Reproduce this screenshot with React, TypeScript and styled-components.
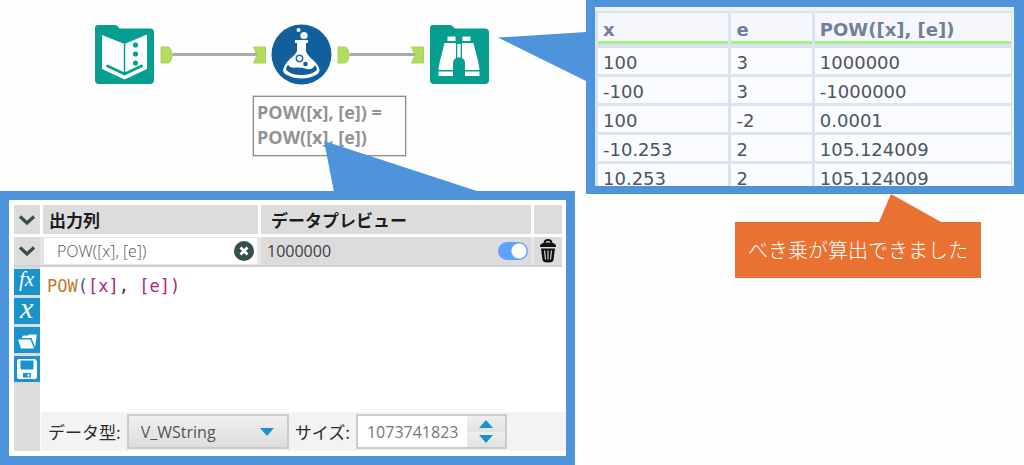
import React from "react";
import styled, { createGlobalStyle } from "styled-components";

const BLUE = "#4d94db";
const TEAL = "#069e90";
const ORANGE = "#e97132";
const ACCENT = "#1a93cb";
const UI = `"Open Sans", "Noto Sans CJK JP", sans-serif`;
const JP = `"Noto Sans CJK JP", sans-serif`;

const GlobalStyle = createGlobalStyle`
  * { box-sizing: border-box; }
  body { margin: 0; background: #fefefe; font-family: ${UI}; color: #222; }
  button, input, select { font: inherit; color: inherit; margin: 0; }
`;

const Page = styled.main`
  display: grid;
  grid-template-columns: 575fr 438fr;
  column-gap: 11px;
  align-items: start;
  overflow: hidden;
`;

const Column = styled.div`
  display: flex;
  flex-direction: column;
  min-width: 0;
`;

/* ---------- workflow ---------- */

const Workflow = styled.section`
  height: 191px;
  padding-top: 24px;
`;

const Flow = styled.div`
  display: flex;
  align-items: center;
  padding-left: 94px;
`;

const NodeIcon = styled.svg`
  flex: none;
  width: 61px;
  height: 61px;
  display: block;
`;

const Link = styled.div<{ $length: number }>`
  display: flex;
  align-items: center;
  flex: none;
  width: ${(p) => p.$length}px;
  margin: 0 5px;
`;

const Anchor = styled.svg`
  flex: none;
  width: 13px;
  height: 18px;
`;

const Wire = styled.div`
  flex: 1;
  height: 3px;
  margin-right: -4px;
  background: #ababab;
  z-index: 1;
`;

const Annotation = styled.p`
  width: 153px;
  margin: 11px 0 0 253px;
  padding: 3px 3px 5px;
  border: 1px solid #8c8c8c;
  outline: 1px solid #d8d8d8;
  font-size: 18px;
  font-weight: 700;
  line-height: 25px;
  color: #929296;
`;

/* ---------- callout panels ---------- */

const Panel = styled.section`
  position: relative;
  border: 9px solid ${BLUE};
  background: #fff;
`;

const Pointer = styled.svg<{ $x: number; $y: number }>`
  position: absolute;
  left: ${(p) => p.$x}px;
  top: ${(p) => p.$y}px;
  pointer-events: none;
`;

/* ---------- formula editor ---------- */

const EditorPanel = styled(Panel)`
  padding: 5px 0 5px 5px;
`;

const EditorRow = styled.div<{ $head?: boolean }>`
  display: grid;
  grid-template-columns: 26px 215fr 270fr 28px;
  column-gap: 3px;
  height: ${(p) => (p.$head ? 29 : 30)}px;
  margin: 0 4px ${(p) => (p.$head ? 3 : 0)}px 0;
  background: ${(p) => (p.$head ? "#fff" : "#e6e6e6")};
  border-bottom: ${(p) => (p.$head ? "none" : "2px solid #d2d2d2")};
`;

const Cell = styled.div<{ $pad?: number }>`
  display: flex;
  align-items: center;
  justify-content: space-between;
  min-width: 0;
  padding: 0 3px 0 ${(p) => p.$pad ?? 0}px;
  background: #dcdcdc;
  font-size: 16px;
  color: #3c3c46;
`;

const HeadCell = styled(Cell)`
  font-family: ${JP};
  font-size: 17px;
  font-weight: 700;
  color: #1c1c1c;
`;

const IconButton = styled.button`
  display: flex;
  align-items: center;
  justify-content: center;
  flex: none;
  padding: 0;
  border: 0;
  background: none;
`;

const CellButton = styled(IconButton)`
  width: 100%;
  height: 100%;
  background: #dcdcdc;
`;

const NameField = styled(Cell)`
  background: #fff;
  border: 1px solid #e2e2e2;
`;

const NameInput = styled.input`
  flex: 1;
  min-width: 0;
  padding: 0;
  border: 0;
  background: none;
  font-size: 16px;
  font-weight: 300;
  color: #555;
`;

const Toggle = styled.input`
  appearance: none;
  width: 30px;
  height: 18px;
  border-radius: 9px;
  background: radial-gradient(circle at 21px 9px, #fff 7px, #5ea2ff 8px);
`;

const EditorBody = styled.div`
  display: grid;
  grid-template-columns: 26px 1fr;
  column-gap: 1px;
`;

const Tools = styled.div`
  display: flex;
  flex-direction: column;
  gap: 3px;
  padding-top: 2px;
  background: #dcdcdc;
`;

const ToolButton = styled(IconButton)`
  height: 26px;
  background: ${ACCENT};
`;

const Code = styled.pre`
  margin: 0;
  height: 145px;
  padding: 7px 6px;
  font-family: "DejaVu Sans Mono", monospace;
  font-size: 17px;
  line-height: 24px;
  color: #333;
`;

const Token = styled.span<{ $color: string }>`
  color: ${(p) => p.$color};
`;

const Footer = styled.div`
  display: flex;
  align-items: center;
  gap: 6px;
  height: 39px;
  padding-left: 7px;
  background: #f3f3f3;
`;

const FieldLabel = styled.label`
  flex: none;
  font-family: ${JP};
  font-size: 17px;
  line-height: 24px;
  color: #2c2c2c;
`;

const SelectBox = styled.div`
  position: relative;
  width: 162px;
  height: 35px;
`;

const TypeSelect = styled.select`
  appearance: none;
  width: 100%;
  height: 100%;
  padding: 0 12px;
  border: 2px solid #cbcbcb;
  border-radius: 0;
  background: linear-gradient(#f0f0f0, #dedede);
  font-size: 16px;
  color: #555;
`;

const Caret = styled.svg`
  position: absolute;
  right: 15px;
  top: 14px;
  pointer-events: none;
`;

const SizeBox = styled.div`
  display: flex;
  width: 151px;
  height: 35px;
  border: 2px solid #cbcbcb;
  background: #fff;
`;

const SizeInput = styled.input`
  flex: 1;
  min-width: 0;
  padding: 0 0 0 9px;
  border: 0;
  background: none;
  font-size: 16px;
  color: #777;
`;

const Steppers = styled.div`
  display: grid;
  grid-template-rows: 1fr 1fr;
  width: 38px;
`;

const StepButton = styled(IconButton)`
  background: linear-gradient(#efefef, #e2e2e2);
`;

/* ---------- result table ---------- */

const ResultPanel = styled(Panel)`
  border-width: 7px 10px 8px 9px;
`;

const TableClip = styled.div`
  height: 179px;
  padding: 4px 2px 0 0;
  overflow: hidden;
  background: #eef1f8;
`;

const Table = styled.table`
  width: 100%;
  table-layout: fixed;
  border-collapse: separate;
  border-spacing: 0;
  font-family: "DejaVu Sans", sans-serif;
  font-size: 18px;
  text-align: left;
  background: #fbfcff;

  th, td {
    border-left: 3px solid #dce2ef;
    white-space: nowrap;
  }
  th:last-child, td:last-child {
    border-right: 1px solid #dce2ef;
  }
`;

const Th = styled.th<{ $width: number }>`
  width: ${(p) => p.$width}%;
  height: 37px;
  padding: 2px 0 0 5px;
  border-top: 2px solid #dce2ef;
  border-bottom: 4px solid #dce2ef;
  background: linear-gradient(#9ef582, #9ef582) 0 100% / 100% 3px no-repeat, #f5f7fc;
  background-clip: padding-box;
  line-height: 24px;
  color: #727f9b;
`;

const Td = styled.td`
  height: 29px;
  padding: 4px 0 0 5px;
  border-bottom: 3px solid #dce2ef;
  line-height: 22px;
  color: #4e5364;
`;

/* ---------- orange note ---------- */

const Note = styled.div`
  position: relative;
  align-self: flex-start;
  margin: 28px 0 0 149px;
  padding: 13px;
  background: ${ORANGE};
  color: #fff;
  font-family: ${JP};
  font-size: 20px;
  font-weight: 300;
  line-height: 30px;
  white-space: nowrap;
`;

const Connector = ({ length }: { length: number }) => (
  <Link $length={length}>
    <Anchor viewBox="0 0 13 18">
      <path d="M1 1H8Q10 1 11 4L12.500 9L11 14Q10 17 8 17H1Z" fill="#b3dc5e" stroke="#a9cf62" />
    </Anchor>
    <Wire />
    <Anchor viewBox="0 0 13 18">
      <path d="M.5 1H12.500V17H.5L4 9Z" fill="#b3dc5e" stroke="#a9cf62" />
    </Anchor>
  </Link>
);

const FOLDER =
  "M4 1H21Q23 1 24 2.500L25.500 4.500H56Q60 4.500 60 8.500V56Q60 60 56 60H5Q1 60 1 56V4Q1 1 4 1Z";

const InputNode = () => (
  <NodeIcon viewBox="0 0 61 61">
    <path d={FOLDER} fill={TEAL} />
    <path d="M8 11L30.500 20L53 10.500V45L30.500 55.500L8 45Z" fill="#fff" />
    <path d="M30.500 20V49" stroke={TEAL} strokeWidth="1.500" />
    <path d="M12.500 41.500L30.500 50L48.500 41.500" stroke={TEAL} strokeWidth="2.500" fill="none" />
    <circle cx="41.500" cy="21" r="2.600" fill={TEAL} />
    <circle cx="41.500" cy="30" r="2.600" fill={TEAL} />
    <circle cx="41.500" cy="39" r="2.600" fill={TEAL} />
  </NodeIcon>
);

const FormulaNode = () => (
  <NodeIcon viewBox="0 0 61 61">
    <circle cx="30.500" cy="30.500" r="30" fill="#125f9e" />
    <circle cx="27.500" cy="6" r="2" fill="#fff" />
    <circle cx="33" cy="11.500" r="3.600" fill="#fff" />
    <path
      d="M24 16H37V19H35V27Q36 31 42 36Q47.500 41 48.500 46Q48.500 49 45 51Q38 54.500 30.500 54.500T16 51Q12 49 12 46Q13.500 40 19 35Q25 30 26 27V19H24Z"
      fill="#fff"
    />
    <path
      d="M17 40.500Q19 44.500 25 43.500Q32 43 36 45Q42 46 44 41Q46.500 44 45.500 46.500Q40 51 30.500 51T15.500 46.500Q14.500 43.500 17 40.500Z"
      fill="#125f9e"
    />
    <circle cx="28.500" cy="34.500" r="3.200" fill="#fff" stroke="#2c6fa8" strokeWidth="1.500" />
    <circle cx="34.500" cy="40" r="2.300" fill="#125f9e" />
  </NodeIcon>
);

const BrowseNode = () => (
  <NodeIcon viewBox="0 0 61 61">
    <path d={FOLDER} fill={TEAL} />
    <g fill="#fff">
      <path d="M18.500 12.500H26.500V17H18.500ZM33.500 12.500H41.500V17H33.500Z" />
      <path d="M15.500 19H27V34Q24 35.500 24 39V46H9.500Q10 40 12.500 31Z" />
      <path d="M44.500 19H33V34Q36 35.500 36 39V46H50.500Q50 40 47.500 31Z" />
      <path d="M28.300 20H31.700V33.500H28.300Z" />
      <path d="M9.500 47.500H24V52H9.500ZM36 47.500H50.500V52H36Z" />
    </g>
  </NodeIcon>
);

const Chevron = () => (
  <svg width="18" height="12" viewBox="0 0 18 12">
    <path d="M2 2.500L9 9L16 2.500" fill="none" stroke="#34504c" strokeWidth="3.200" />
  </svg>
);

const Triangle = ({ up }: { up?: boolean }) => (
  <svg width="14" height="8" viewBox="0 0 14 8">
    <path d={up ? "M0 8L7 0L14 8Z" : "M0 0H14L7 8Z"} fill={ACCENT} />
  </svg>
);

const ScriptText = styled.text`
  font-family: "Liberation Serif", serif;
  font-style: italic;
  fill: #fff;
`;

const rows = [
  ["100", "3", "1000000"],
  ["-100", "3", "-1000000"],
  ["100", "-2", "0.0001"],
  ["-10.253", "2", "105.124009"],
  ["10.253", "2", "105.124009"],
];

export default function App() {
  return (
    <>
      <GlobalStyle />
      <Page>
        <Column>
          <Workflow>
            <Flow>
              <InputNode />
              <Connector length={106} />
              <FormulaNode />
              <Connector length={87} />
              <BrowseNode />
            </Flow>
            <Annotation>
              POW([x], [e]) =<br />
              POW([x], [e])
            </Annotation>
          </Workflow>

          <EditorPanel>
            <Pointer $x={315} $y={-59} width="156" height="51" viewBox="0 0 156 51">
              <path d="M0 0L156 51H10Z" fill={BLUE} />
            </Pointer>
            <EditorRow $head>
              <CellButton aria-label="すべて折りたたむ"><Chevron /></CellButton>
              <HeadCell $pad={6}>出力列</HeadCell>
              <HeadCell $pad={10}>データプレビュー</HeadCell>
              <Cell />
            </EditorRow>
            <EditorRow>
              <CellButton aria-label="折りたたむ"><Chevron /></CellButton>
              <NameField $pad={13}>
                <NameInput aria-label="出力列" defaultValue="POW([x], [e])" />
                <IconButton aria-label="クリア">
                  <svg width="20" height="20" viewBox="0 0 20 20">
                    <circle cx="10" cy="10" r="10" fill="#34504c" />
                    <path d="M6.500 6.500L13.500 13.500M13.500 6.500L6.500 13.500" stroke="#fff" strokeWidth="2.800" />
                  </svg>
                </IconButton>
              </NameField>
              <Cell $pad={6}>
                1000000
                <Toggle type="checkbox" role="switch" aria-label="プレビュー" defaultChecked />
              </Cell>
              <CellButton aria-label="削除">
                <svg width="18" height="24" viewBox="0 0 18 24">
                  <path d="M5.500 4Q5.500 1 9 1T12.500 4" fill="none" stroke="#111" strokeWidth="1.800" />
                  <path d="M1 6.500Q1.500 3.500 9 3.500T17 6.500V8H1Z" fill="#111" />
                  <path d="M2 9.500H16L14.500 21Q14 23.500 9 23.500T3.500 21Z" fill="#111" />
                  <path d="M5.500 11.500L6.500 20.500M9 11.500V20.500M12.500 11.500L11.500 20.500" stroke="#dcdcdc" strokeWidth="1.100" />
                </svg>
              </CellButton>
            </EditorRow>
            <EditorBody>
              <Tools>
                <ToolButton aria-label="関数">
                  <svg width="26" height="26" viewBox="0 0 26 26">
                    <ScriptText x="5" y="17" fontSize="21">fx</ScriptText>
                  </svg>
                </ToolButton>
                <ToolButton aria-label="変数">
                  <svg width="26" height="26" viewBox="0 0 26 26">
                    <ScriptText x="6" y="20" fontSize="30">x</ScriptText>
                  </svg>
                </ToolButton>
                <ToolButton aria-label="開く">
                  <svg width="26" height="26" viewBox="0 0 26 26" fill="#fff">
                    <path d="M8 10L9.500 8.500H14L15 7.500H22.500V10L21 20L17.500 11H8Z" />
                    <path d="M4 12.500H16.500L20 21.500H7Z" />
                  </svg>
                </ToolButton>
                <ToolButton aria-label="保存">
                  <svg width="26" height="26" viewBox="0 0 26 26">
                    <path d="M5 3H21L23 5V21Q23 23 21 23H5Q3 23 3 21V5Q3 3 5 3Z" fill="#fff" />
                    <path d="M6.500 4.500H19.500V12Q19.500 13.500 18 13.500H8Q6.500 13.500 6.500 12Z" fill={ACCENT} />
                    <path d="M9 17H17V21.500H9Z" fill={ACCENT} />
                    <path d="M13.500 18H15.500V20.500H13.500Z" fill="#fff" />
                  </svg>
                </ToolButton>
              </Tools>
              <div>
                <Code>
                  <Token $color="#c07a2c">POW</Token>
                  <Token $color="#3a5a8c">(</Token>
                  <Token $color="#a8287c">[x]</Token>
                  {", "}
                  <Token $color="#a8287c">[e]</Token>
                  <Token $color="#a8287c">)</Token>
                </Code>
                <Footer>
                  <FieldLabel htmlFor="type">データ型:</FieldLabel>
                  <SelectBox>
                    <TypeSelect id="type" defaultValue="V_WString">
                      <option>V_WString</option>
                    </TypeSelect>
                    <Caret width="14" height="8" viewBox="0 0 14 8">
                      <path d="M0 0H14L7 8Z" fill={ACCENT} />
                    </Caret>
                  </SelectBox>
                  <FieldLabel htmlFor="size">サイズ:</FieldLabel>
                  <SizeBox>
                    <SizeInput id="size" defaultValue="1073741823" />
                    <Steppers>
                      <StepButton aria-label="増やす"><Triangle up /></StepButton>
                      <StepButton aria-label="減らす"><Triangle /></StepButton>
                    </Steppers>
                  </SizeBox>
                </Footer>
              </div>
            </EditorBody>
          </EditorPanel>
        </Column>

        <Column>
          <ResultPanel>
            <Pointer $x={-97} $y={30} width="89" height="45" viewBox="0 0 89 45" overflow="visible">
              <path d="M0 0.500L88 -5V44Z" fill={BLUE} />
            </Pointer>
            <TableClip>
              <Table>
                <thead>
                  <tr>
                    <Th $width={32}>x</Th>
                    <Th $width={20}>e</Th>
                    <Th $width={48}>POW([x], [e])</Th>
                  </tr>
                </thead>
                <tbody>
                  {rows.map((row, i) => (
                    <tr key={i}>
                      {row.map((value, j) => (
                        <Td key={j}>{value}</Td>
                      ))}
                    </tr>
                  ))}
                </tbody>
              </Table>
            </TableClip>
          </ResultPanel>
          <Note>
            <Pointer $x={144} $y={-28} width="63" height="29" viewBox="0 0 63 29">
              <path d="M12 0L62 28V29H0V28Z" fill={ORANGE} />
            </Pointer>
            べき乗が算出できました
          </Note>
        </Column>
      </Page>
    </>
  );
}
